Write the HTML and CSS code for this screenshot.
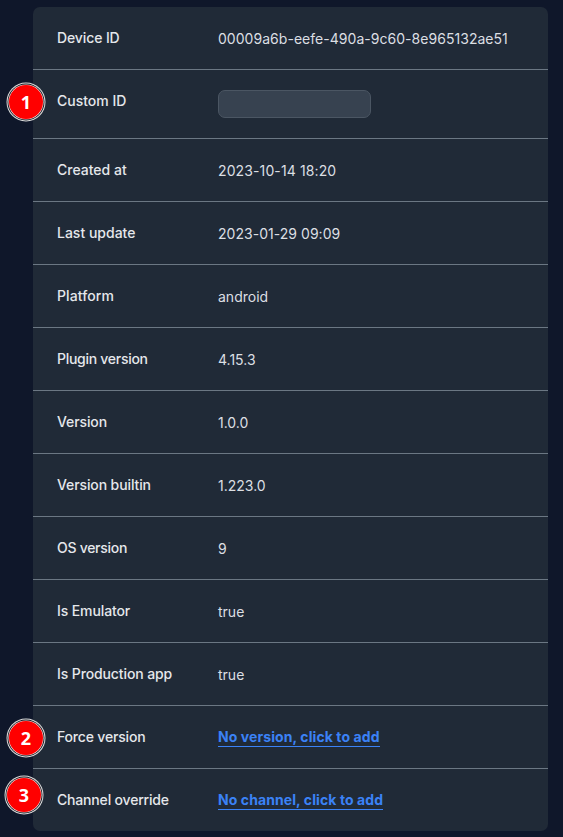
FILE: index.html
```html
<!DOCTYPE html>
<html lang="en">
<head>
<meta charset="utf-8">
<title>Device</title>
<link rel="stylesheet" href="styles.css">
</head>
<body>
<dl class="card">
<div class="row"><dt class="snug">Device ID</dt><dd class="wide">00009a6b-eefe-490a-9c60-8e965132ae51</dd></div>
<div class="row custom"><span class="badge">1</span><dt>Custom ID</dt><dd><input class="field" type="text" aria-label="Custom ID"></dd></div>
<div class="row"><dt>Created at</dt><dd class="wider">2023-10-14 18:20</dd></div>
<div class="row"><dt>Last update</dt><dd class="wide">2023-01-29 09:09</dd></div>
<div class="row"><dt class="loose">Platform</dt><dd>android</dd></div>
<div class="row"><dt class="tight">Plugin version</dt><dd>4.15.3</dd></div>
<div class="row"><dt class="snug">Version</dt><dd>1.0.0</dd></div>
<div class="row"><dt class="snug">Version builtin</dt><dd>1.223.0</dd></div>
<div class="row"><dt class="tight">OS version</dt><dd>9</dd></div>
<div class="row"><dt class="snug">Is Emulator</dt><dd>true</dd></div>
<div class="row"><dt class="snug">Is Production app</dt><dd>true</dd></div>
<div class="row"><span class="badge">2</span><dt class="mid">Force version</dt><dd class="action"><a class="link" href="#">No version, click to add</a></dd></div>
<div class="row"><span class="badge raised">3</span><dt class="mid">Channel override</dt><dd class="action"><a class="link" href="#">No channel, click to add</a></dd></div>
</dl>
</body>
</html>
```

FILE: styles.css
```css
* { box-sizing: border-box; }
body {
  margin: 0;
  background: #0f172a;
  font-family: Inter, sans-serif;
  font-size: 14px;
  line-height: 20px;
  color: #e5e7eb;
  overflow: hidden;
}
.card {
  margin: 7px 15px 0 33px;
  height: 824px;
  background: #202a37;
  border-radius: 7px;
}
.row {
  position: relative;
  display: grid;
  grid-template-columns: 161px 1fr;
  height: 63px;
  padding: 21px 24px 0;
  border-bottom: 1px solid #6b7783;
}
.row:last-child { border-bottom: 0; }
.custom { height: 69px; }
dt { font-weight: 500; }
.loose { letter-spacing: 0.1px; }
.snug { letter-spacing: -0.11px; }
.mid { letter-spacing: -0.18px; }
.tight { letter-spacing: -0.28px; }
dd { margin: 1px 0 0; color: #dcdfe3; }
.wide { letter-spacing: 0.035px; }
.wider { letter-spacing: 0.12px; }
.action { margin-top: 0; }
.field {
  display: block;
  width: 153px;
  height: 28px;
  margin-top: -2px;
  background: #374250;
  border: 1px solid #4b5663;
  border-radius: 7px;
}
.link {
  padding-bottom: 1px;
  color: #3b82f6;
  font-weight: 700;
  letter-spacing: 0.09px;
  text-decoration: none;
  border-bottom: 1px solid #3b82f6;
}
.badge {
  position: absolute;
  left: -24px;
  top: 15px;
  width: 34px;
  height: 34px;
  border-radius: 50%;
  background: #f00;
  box-shadow: 0 0 0 0.6px #fbdcdc, 0 0 0 1.5px #111820, 0 0 0 2.5px #ddd;
  color: #fff;
  font-family: "Open Sans", sans-serif;
  font-size: 18px;
  font-weight: 700;
  text-align: center;
  line-height: 34px;
}
.raised { left: -26px; top: 9px; }
```
